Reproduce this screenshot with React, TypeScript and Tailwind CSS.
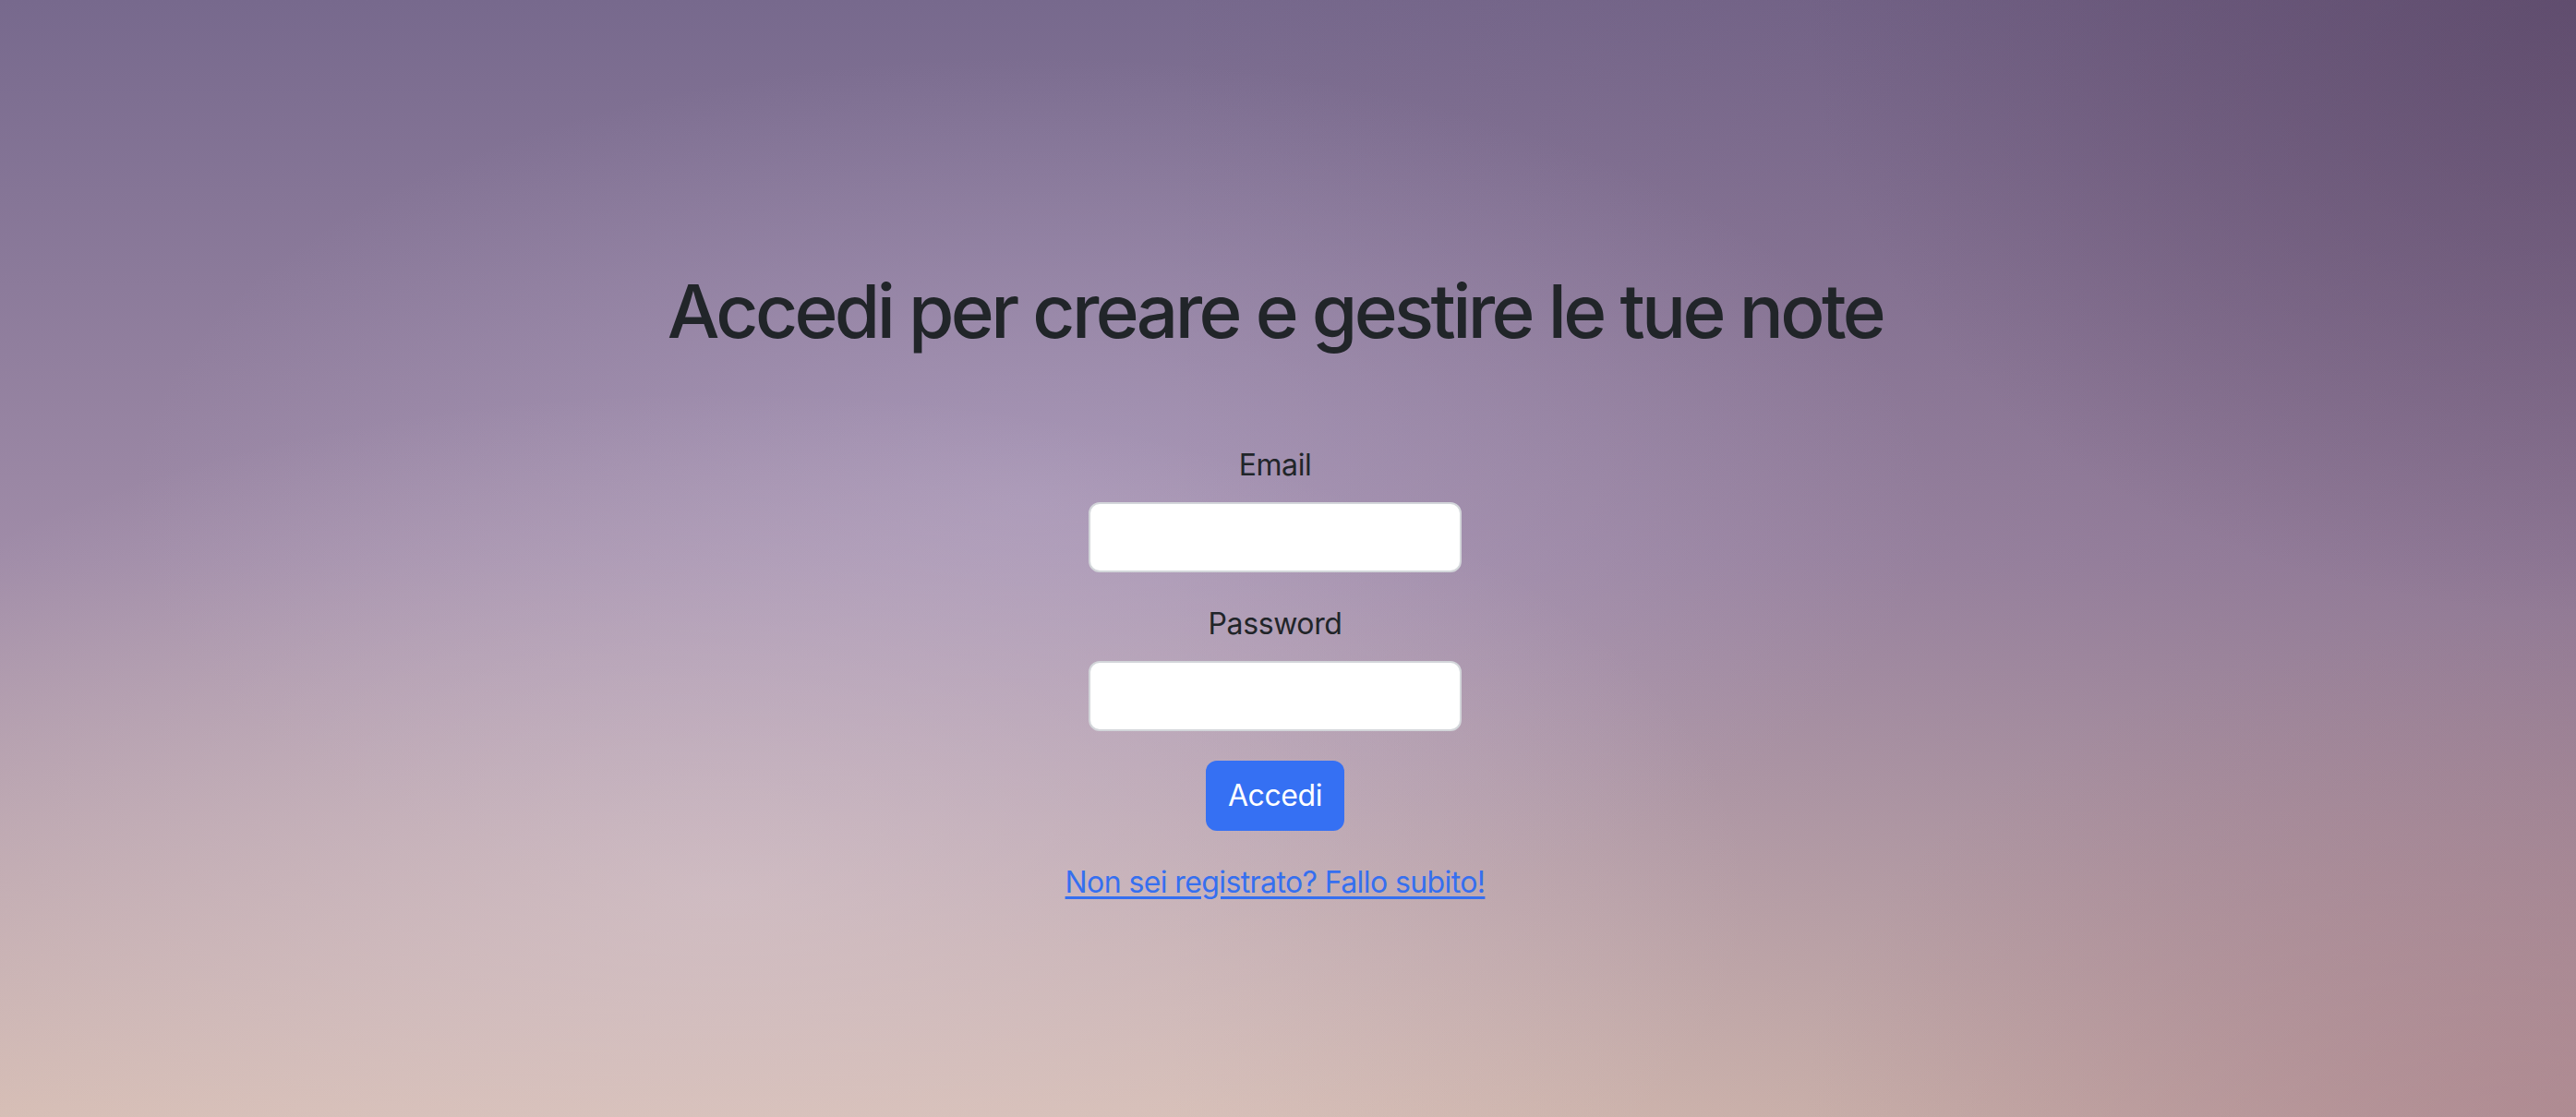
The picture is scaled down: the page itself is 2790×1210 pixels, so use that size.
import React from 'react';

const App: React.FC = () => {
  return (
    <div className="h-screen w-full overflow-hidden bg-[image:radial-gradient(ellipse_30%_55%_at_100%_0%,rgba(80,60,90,0.45),rgba(80,60,90,0)),radial-gradient(ellipse_30%_45%_at_100%_100%,rgba(165,120,135,0.5),rgba(165,120,135,0)),radial-gradient(ellipse_40%_45%_at_28%_80%,rgba(222,206,212,0.5),rgba(222,206,212,0)),radial-gradient(ellipse_35%_40%_at_40%_45%,rgba(185,170,205,0.45),rgba(185,170,205,0)),linear-gradient(to_right,rgba(70,35,70,0)_45%,rgba(70,35,70,0.2)),linear-gradient(to_bottom,#77698d,#a08ca8_50%,#d6bdb3)] font-['Inter','Liberation_Sans',sans-serif] text-[#212529]">
      <div className="flex flex-col items-center pr-[28px] pt-[289px]">
        <h1 className="text-[80px] font-medium leading-[96px] tracking-[-3.6px]">
          Accedi per creare e gestire le tue note
        </h1>

        <form className="mt-[95px] flex flex-col items-center" onSubmit={(e) => e.preventDefault()}>
          <label htmlFor="email" className="mb-[16px] text-[32px] leading-[48px] tracking-[-0.4px]">
            Email
          </label>
          <input
            id="email"
            type="email"
            className="h-[76px] w-[404px] rounded-[12px] border-2 border-[#d3d6da] bg-white px-6 text-[32px] outline-none"
          />

          <label htmlFor="password" className="mb-[16px] mt-[32px] text-[32px] leading-[48px] tracking-[-0.4px]">
            Password
          </label>
          <input
            id="password"
            type="password"
            className="h-[76px] w-[404px] rounded-[12px] border-2 border-[#d3d6da] bg-white px-6 text-[32px] outline-none"
          />

          <button
            type="submit"
            className="mt-[32px] h-[76px] rounded-[12px] bg-[#3570f3] px-[24px] text-[32px] leading-[48px] tracking-[-0.4px] text-white"
          >
            Accedi
          </button>
        </form>

        <a
          href="#"
          className="mt-[32px] text-[32px] leading-[48px] tracking-[-0.6px] text-[#356ff0] underline underline-offset-[4px]"
        >
          Non sei registrato? Fallo subito!
        </a>
      </div>
    </div>
  );
};

export default App;
